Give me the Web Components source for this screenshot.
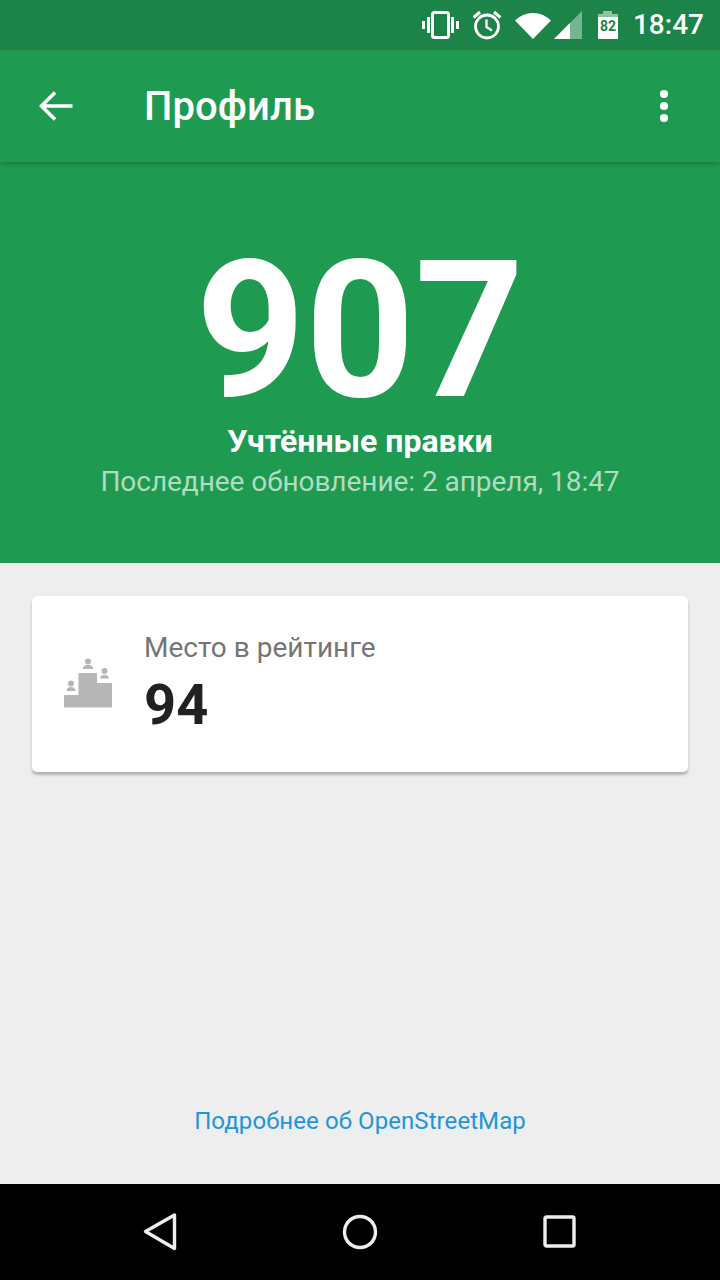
<!doctype html>
<html lang="ru">
<head>
<meta charset="utf-8">
<title>Профиль</title>
<style>
  html, body { margin: 0; padding: 0; height: 100%; }
  body { font-family: Roboto, "Noto Sans", sans-serif; background: #eee; }
  #app { display: flex; flex-direction: column; height: 1280px; }
</style>
</head>
<body>
<div id="app">
  <status-bar time="18:47"></status-bar>
  <app-toolbar title="Профиль"></app-toolbar>
  <score-hero value="907" label="Учтённые правки" updated="Последнее обновление: 2 апреля, 18:47"></score-hero>
  <profile-content>
    <rank-card label="Место в рейтинге" value="94"></rank-card>
    <a slot="link" href="#">Подробнее об OpenStreetMap</a>
  </profile-content>
  <nav-bar></nav-bar>
</div>

<script>
  class StatusBar extends HTMLElement {
    constructor() {
      super();
      this.attachShadow({mode: 'open'}).innerHTML = `
        <style>
          :host { display: flex; flex: none; height: 50px; background: #1c8449; color: #fff; align-items: center; justify-content: flex-end; padding-right: 16px; box-sizing: border-box; }
          svg { display: block; flex: none; }
          .time { font-size: 28px; font-weight: 500; margin-left: 15px; line-height: 50px; }
        </style>
        <svg width="37" height="28" viewBox="0 0 37 28" style="margin-right:13px">
          <rect x="10.5" y="1.500" width="16" height="25" rx="2" fill="none" stroke="#fff" stroke-width="3"/>
          <rect x="0" y="10" width="3" height="8" fill="#fff"/>
          <rect x="5" y="6" width="3" height="16" fill="#fff"/>
          <rect x="29" y="6" width="3" height="16" fill="#fff"/>
          <rect x="34" y="10" width="3" height="8" fill="#fff"/>
        </svg>
        <svg width="30" height="30" viewBox="0 0 30 30" style="margin-right:13px">
          <circle cx="15" cy="16.500" r="11.500" fill="none" stroke="#fff" stroke-width="2.800"/>
          <path d="M14.500 9.500V17L20 20.500" fill="none" stroke="#fff" stroke-width="2.400"/>
          <path d="M1.500 7.500L8 2M28.500 7.500L22 2" fill="none" stroke="#fff" stroke-width="3"/>
        </svg>
        <svg width="36" height="27" viewBox="0 0 36 27">
          <path d="M0 8.5C4.500 4 11 1 18 1C25 1 31.500 4 36 8.500L18 27Z" fill="#fff"/>
        </svg>
        <svg width="28" height="28" viewBox="0 0 28 28" style="margin-left:3px">
          <path d="M0 28L28 0V28Z" fill="#fff" fill-opacity=".4"/>
          <path d="M0 28L16 12V28Z" fill="#fff"/>
        </svg>
        <svg width="20" height="28" viewBox="0 0 20 28" style="margin-left:16px">
          <path d="M5 0H14V3H20V28H0V3H5Z" fill="#fff"/>
          <path d="M5 0H14V3H20V6H0V3H5Z" fill="#8fc4a3"/>
          <text x="10" y="20" text-anchor="middle" font-family="Roboto" font-size="14" font-weight="700" fill="#1c8449">82</text>
        </svg>
        <span class="time">${this.getAttribute('time')}</span>`;
    }
  }

  class AppToolbar extends HTMLElement {
    constructor() {
      super();
      this.attachShadow({mode: 'open'}).innerHTML = `
        <style>
          :host { display: flex; flex: none; position: relative; z-index: 1; height: 112px; background: #1f9a51; color: #fff; align-items: center; box-shadow: 0 2px 4px rgba(0,0,0,.2); }
          .back { flex: none; display: block; margin-left: 39px; }
          h1 { flex: 1; margin: 2px 0 0 71px; font-size: 40px; font-weight: 500; line-height: 110px; letter-spacing: .1px; }
          .more { flex: none; display: block; margin-right: 50px; }
        </style>
        <svg class="back" width="34" height="32" viewBox="0 0 34 32">
          <path d="M33.500 16H3M16 2.500L2.500 16L16 29.500" fill="none" stroke="#fff" stroke-width="3.600"/>
        </svg>
        <h1>${this.getAttribute('title')}</h1>
        <svg class="more" width="12" height="32" viewBox="0 0 12 32">
          <circle cx="6" cy="4" r="4" fill="#fff"/>
          <circle cx="6" cy="16" r="4" fill="#fff"/>
          <circle cx="6" cy="28" r="4" fill="#fff"/>
        </svg>`;
    }
  }

  class ScoreHero extends HTMLElement {
    constructor() {
      super();
      this.attachShadow({mode: 'open'}).innerHTML = `
        <style>
          :host { display: flex; flex: none; flex-direction: column; align-items: center; height: 401px; background: #1f9a51; color: #fff; }
          .value { font-size: 191px; font-weight: 700; line-height: 190px; margin-top: 74px; }
          .label { font-size: 32px; font-weight: 700; line-height: 40px; margin-top: -5px; }
          .updated { font-size: 28px; line-height: 40px; margin-top: 1px; letter-spacing: -.05px; color: #b0dcc0; }
        </style>
        <div class="value">${this.getAttribute('value')}</div>
        <div class="label">${this.getAttribute('label')}</div>
        <div class="updated">${this.getAttribute('updated')}</div>`;
    }
  }

  class ProfileContent extends HTMLElement {
    constructor() {
      super();
      this.attachShadow({mode: 'open'}).innerHTML = `
        <style>
          :host { display: flex; flex: 1; flex-direction: column; padding: 33px 32px 0; background: #eee; min-height: 0; }
          .spacer { flex: 1; }
          .link { display: block; text-align: center; height: 81px; font-size: 24px; line-height: 36px; letter-spacing: .08px; }
          ::slotted(a) { color: #2196d9; text-decoration: none; }
        </style>
        <slot></slot>
        <div class="spacer"></div>
        <div class="link"><slot name="link"></slot></div>`;
    }
  }

  class RankCard extends HTMLElement {
    constructor() {
      super();
      this.attachShadow({mode: 'open'}).innerHTML = `
        <style>
          :host { display: flex; flex: none; height: 176px; background: #fff; border-radius: 5px; box-shadow: 0 3px 3px rgba(0,0,0,.25); align-items: flex-start; }
          svg { flex: none; display: block; margin: 62px 0 0 32px; }
          .text { margin-left: 32px; }
          .label { font-size: 28px; line-height: 36px; margin-top: 34px; color: #757575; }
          .value { font-size: 56px; font-weight: 700; line-height: 60px; margin-top: 9px; color: #212121; }
        </style>
        <svg width="48" height="50" viewBox="0 0 48 50" fill="#b6b6b6">
          <path d="M0 37H14.500V15H33V25H48V49.500H0Z"/>
          <circle cx="24" cy="3.500" r="3"/><path d="M19 11C19 8 21 7 24 7C27 7 29 8 29 11Z"/>
          <circle cx="40.500" cy="13" r="3"/><path d="M36 20.500C36 18 38 17 40.500 17C43 17 45 18 45 20.500Z"/>
          <circle cx="7" cy="25.500" r="3"/><path d="M2.500 33C2.500 30.500 4.500 29 7 29C9.500 29 11.500 30.500 11.500 33Z"/>
        </svg>
        <div class="text">
          <div class="label">${this.getAttribute('label')}</div>
          <div class="value">${this.getAttribute('value')}</div>
        </div>`;
    }
  }

  class NavBar extends HTMLElement {
    constructor() {
      super();
      this.attachShadow({mode: 'open'}).innerHTML = `
        <style>
          :host { display: flex; flex: none; height: 96px; background: #000; align-items: center; justify-content: space-between; padding: 0 143px; box-sizing: border-box; }
          svg { display: block; flex: none; }
        </style>
        <svg width="34" height="38" viewBox="0 0 34 38"><path d="M31.500 2L2.500 18.500L31.500 35.500Z" fill="none" stroke="#eee" stroke-width="3.400" stroke-linejoin="round"/></svg>
        <svg width="36" height="36" viewBox="0 0 36 36"><circle cx="18" cy="18" r="15.500" fill="none" stroke="#eee" stroke-width="3.400"/></svg>
        <svg width="34" height="34" viewBox="0 0 34 34"><rect x="2" y="2" width="29" height="29" rx="1.500" fill="none" stroke="#eee" stroke-width="3.400"/></svg>`;
    }
  }

  customElements.define('status-bar', StatusBar);
  customElements.define('app-toolbar', AppToolbar);
  customElements.define('score-hero', ScoreHero);
  customElements.define('profile-content', ProfileContent);
  customElements.define('rank-card', RankCard);
  customElements.define('nav-bar', NavBar);
</script>
</body>
</html>
